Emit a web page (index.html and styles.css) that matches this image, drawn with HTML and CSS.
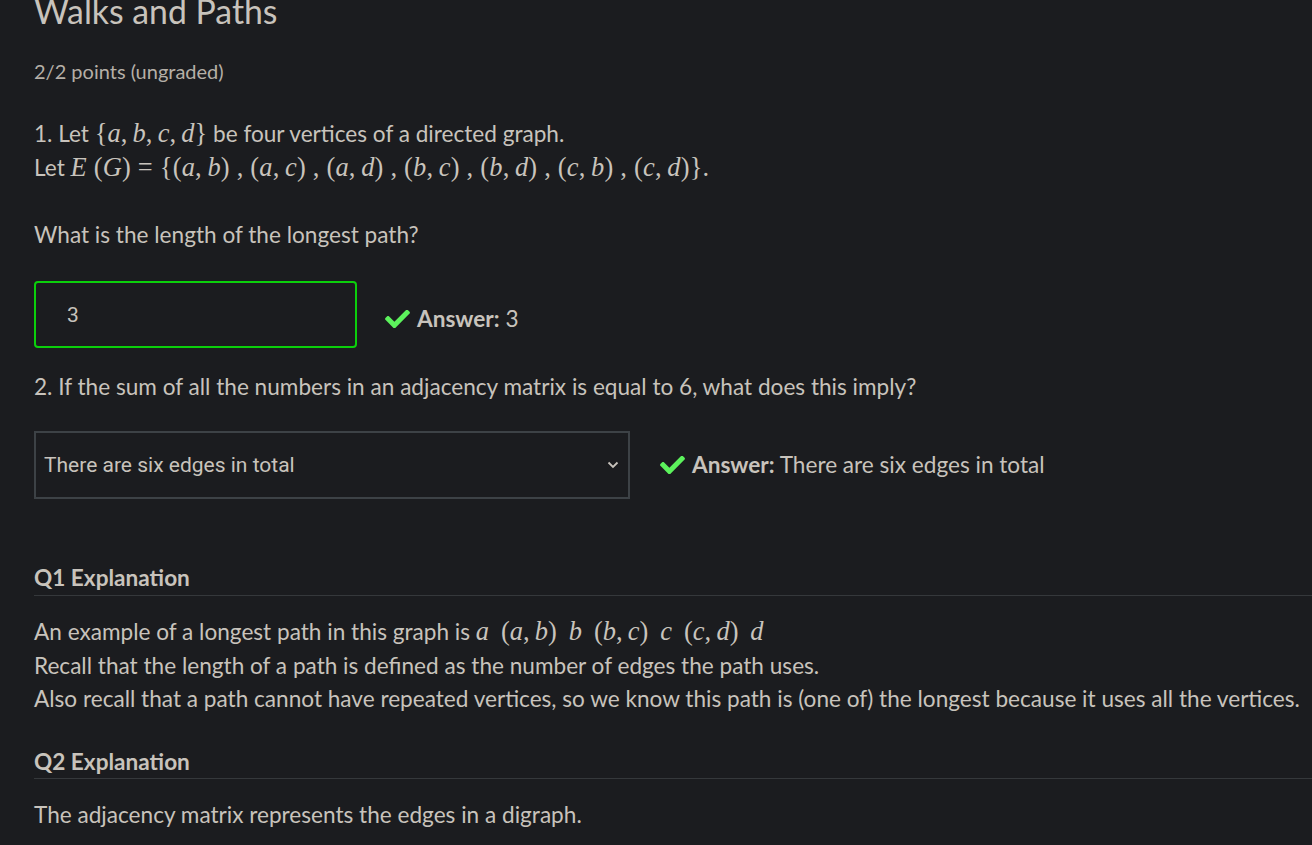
FILE: index.html
```html
<!DOCTYPE html>
<html lang="en">
<head>
<meta charset="utf-8">
<title>Walks and Paths</title>
<link rel="stylesheet" href="styles.css">
</head>
<body>
<main class="page">
  <h1 class="title">Walks and Paths</h1>
  <p class="points">2/2 points (ungraded)</p>

  <p class="question q1">1. Let <span class="m"><span class="up">{</span><i>a</i>,&thinsp;<i>b</i>,&thinsp;<i>c</i>,&thinsp;<i>d</i><span class="up">}</span></span> be four vertices of a directed graph.<br>Let <span class="m m-wide"><i>E</i> <span class="up">(</span><i>G</i><span class="up">)</span> <span class="up">=</span> <span class="up">{(</span><i>a</i>,&thinsp;<i>b</i><span class="up">)</span> , <span class="up">(</span><i>a</i>,&thinsp;<i>c</i><span class="up">)</span> , <span class="up">(</span><i>a</i>,&thinsp;<i>d</i><span class="up">)</span> , <span class="up">(</span><i>b</i>,&thinsp;<i>c</i><span class="up">)</span> , <span class="up">(</span><i>b</i>,&thinsp;<i>d</i><span class="up">)</span> , <span class="up">(</span><i>c</i>,&thinsp;<i>b</i><span class="up">)</span> , <span class="up">(</span><i>c</i>,&thinsp;<i>d</i><span class="up">)}</span>.</span></p>

  <p class="question q1b">What is the length of the longest path?</p>

  <div class="answer-row row1">
    <input class="text-input" type="text" value="3" readonly>
    <div class="result">
      <svg class="check" viewBox="0 0 512 370" aria-hidden="true"><path d="M173.9 368.4l-166.4-166.4c-10-10-10-26.2 0-36.2l36.2-36.2c10-10 26.2-10 36.2 0L192 241.7 432.1 1.6c10-10 26.2-10 36.2 0l36.2 36.2c10 10 10 26.2 0 36.2l-294.4 294.4c-10 10-26.2 10-36.2 0z" fill="#5cf25c"/></svg>
      <span><b>Answer:</b> 3</span>
    </div>
  </div>

  <p class="question q2">2. If the sum of all the numbers in an adjacency matrix is equal to 6, what does this imply?</p>

  <div class="answer-row row2">
    <div class="select-box">
      <span>There are six edges in total</span>
      <svg class="chevron" viewBox="0 0 12 8" aria-hidden="true"><path d="M1.5 1.5 6 6 10.5 1.5" fill="none" stroke="#c8c3bc" stroke-width="1.8"/></svg>
    </div>
    <div class="result">
      <svg class="check" viewBox="0 0 512 370" aria-hidden="true"><path d="M173.9 368.4l-166.4-166.4c-10-10-10-26.2 0-36.2l36.2-36.2c10-10 26.2-10 36.2 0L192 241.7 432.1 1.6c10-10 26.2-10 36.2 0l36.2 36.2c10 10 10 26.2 0 36.2l-294.4 294.4c-10 10-26.2 10-36.2 0z" fill="#5cf25c"/></svg>
      <span><b>Answer:</b> There are six edges in total</span>
    </div>
  </div>

  <section class="explanation ex1">
    <h2 class="ex-title">Q1 Explanation</h2>
    <p class="ex-text">An example of a longest path in this graph is <span class="m"><i>a</i>&nbsp;&thinsp;<span class="up">(</span><i>a</i>,&thinsp;<i>b</i><span class="up">)</span>&nbsp;&thinsp;<i>b</i>&nbsp;&thinsp;<span class="up">(</span><i>b</i>,&thinsp;<i>c</i><span class="up">)</span>&nbsp;&thinsp;<i>c</i>&nbsp;&thinsp;<span class="up">(</span><i>c</i>,&thinsp;<i>d</i><span class="up">)</span>&nbsp;&thinsp;<i>d</i></span><br>Recall that the length of a path is defined as the number of edges the path uses.<br>Also recall that a path cannot have repeated vertices, so we know this path is (one of) the longest because it uses all the vertices.</p>
  </section>

  <section class="explanation ex2">
    <h2 class="ex-title">Q2 Explanation</h2>
    <p class="ex-text">The adjacency matrix represents the edges in a digraph.</p>
  </section>
</main>
</body>
</html>
```

FILE: styles.css
```css
html, body {
  margin: 0;
  padding: 0;
  background: #1b1c1f;
  overflow: hidden;
}

body {
  color: #c8c3bc;
  font-family: Lato, "Open Sans", sans-serif;
  font-size: 22.6px;
}

.page {
  padding-left: 34px;
}

.title {
  margin: -9px 0 0;
  font-size: 33.8px;
  line-height: 40px;
  font-weight: 400;
}

.points {
  margin: 28px 0 0;
  font-size: 20px;
  line-height: 24px;
  color: #b5afa7;
}

.question {
  margin: 0;
  line-height: 34px;
  white-space: nowrap;
}

.q1 { margin-top: 34px; }
.q1b { margin-top: 33px; }
.q2 { margin-top: 22px; }

.m {
  font-family: "Liberation Serif", "DejaVu Serif", serif;
  font-size: 1.17em;
  line-height: 1;
}

.m-wide {
  letter-spacing: 0.2px;
}

.m i {
  font-style: italic;
}

.m .up {
  font-style: normal;
}

.answer-row {
  display: flex;
  align-items: center;
}

.row1 {
  margin-top: 29px;
  gap: 28px;
}

.row2 {
  margin-top: 27px;
  gap: 30px;
}

.text-input {
  box-sizing: border-box;
  width: 323px;
  height: 67px;
  margin: 0;
  border: 2px solid #0bcf0b;
  border-radius: 4px;
  background: #1b1c1f;
  color: #c8c3bc;
  font-family: Roboto, sans-serif;
  font-size: 21px;
  padding: 0 0 0 31px;
  outline: none;
}

.result {
  display: flex;
  align-items: center;
  gap: 7px;
  line-height: 28px;
}

.row1 .result {
  padding-top: 8px;
}

.result b {
  font-weight: 700;
}

.check {
  width: 25px;
  height: 18px;
  display: block;
}

.select-box {
  box-sizing: border-box;
  width: 596px;
  height: 68px;
  border: 2px solid #3d4246;
  display: flex;
  align-items: center;
  justify-content: space-between;
  padding: 0 9px 0 8px;
  font-family: Roboto, sans-serif;
  font-size: 21px;
  color: #c8c3bc;
}

.chevron {
  width: 12px;
  height: 8px;
  display: block;
}

.explanation {
  margin: 0;
}

.ex1 { margin-top: 65px; }
.ex2 { margin-top: 32px; }

.ex-title {
  margin: 0;
  font-size: 22.6px;
  font-weight: 700;
  line-height: 28px;
  padding-bottom: 3px;
  border-bottom: 1px solid #35383b;
}

.ex2 .ex-title {
  padding-bottom: 2px;
}

.ex-text {
  margin: 19px 0 0;
  line-height: 33.5px;
  white-space: nowrap;
}
```
